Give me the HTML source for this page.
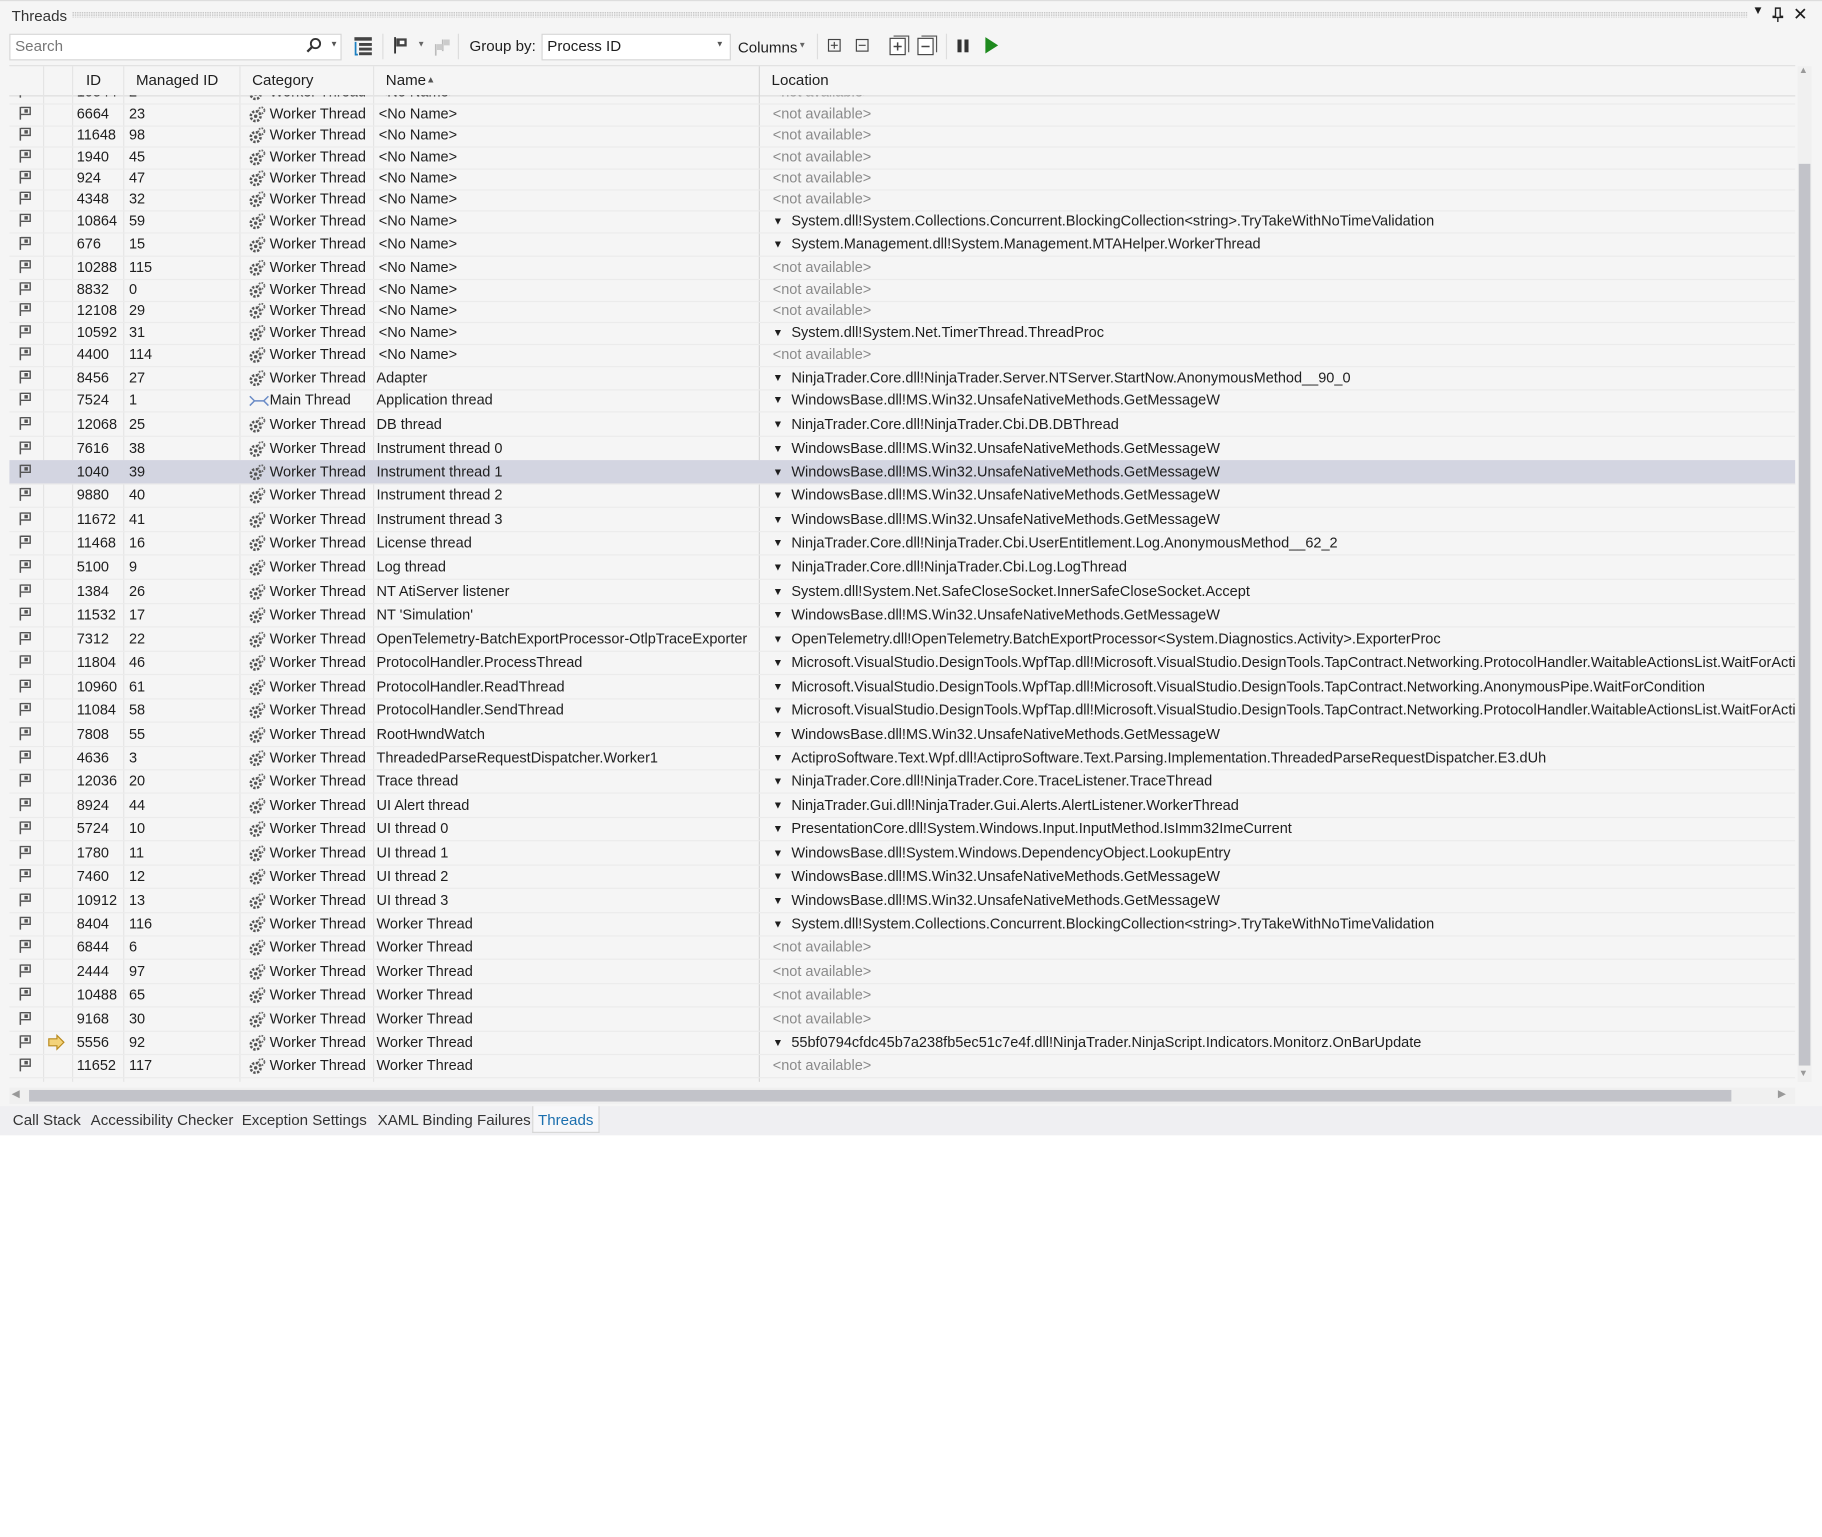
<!DOCTYPE html>
<html><head><meta charset="utf-8"><style>
html,body{margin:0;padding:0;background:#fff;width:1822px;height:1537px;overflow:hidden}
#w{position:absolute;left:0;top:0;width:1568px;height:1323px;transform:scale(1.16199);transform-origin:0 0;font-family:"Liberation Sans",sans-serif;font-size:12.5px;color:#1e1e1e}
.abs{position:absolute;white-space:nowrap}
#panel{position:absolute;left:0;top:0;width:1568px;height:976px;background:#f5f5f5;border-top:1px solid #ddd}
.dots{position:absolute;left:62px;right:64px;top:9px;height:5px;background-image:radial-gradient(#c4c4c4 0.6px,transparent 0.7px);background-size:2px 2px}
.box{position:absolute;background:#fff;border:1px solid #d6d6d6}
.sep{position:absolute;width:1px;background:#ccc}
.hdr{position:absolute;top:56px;height:25px;line-height:24px;font-size:13px}
#list{position:absolute;left:8px;top:81px;width:1537px;height:849px;overflow:hidden}
.row{position:absolute;left:0;width:1537px;height:20px;line-height:20px;border-bottom:1px solid #ebebeb}
.row span{position:absolute;white-space:nowrap}
.sel{background:#d3d5e1}
.na{color:#8a8a8a}
.vl{position:absolute;top:56px;width:1px;background:#e4e4e4;height:874px}
</style></head><body><div id="w">
<div id="panel">
<div class="abs" style="left:10px;top:5px;font-size:13px;color:#333">Threads</div>
<div class="dots"></div>
<div class="abs" style="left:1508px;top:3px;font-size:10px">▼</div>
<svg class="abs" style="left:1525px;top:5px" width="10" height="13"><path d="M3 1h4v7h2v1H1V8h2z M5 9v4" stroke="#222" fill="none" stroke-width="1.2"/></svg>
<div class="abs" style="left:1543px;top:2px;font-size:15px">✕</div>

<div class="box" style="left:8px;top:28px;width:284px;height:21px"></div>
<div class="abs" style="left:13px;top:31px;color:#777;font-size:13px">Search</div>
<svg class="abs" style="left:263px;top:31px" width="14" height="14"><circle cx="8.5" cy="5.5" r="4" stroke="#333" stroke-width="1.6" fill="none"/><path d="M5.5 8.5L1.5 12.5" stroke="#333" stroke-width="2"/></svg>
<div class="abs" style="left:284px;top:34px;font-size:7px;color:#555">▼</div>
<svg class="abs" style="left:304px;top:30px" width="17" height="17"><rect x="1" y="1" width="15" height="3" fill="#444"/><rect x="5" y="6" width="11" height="2.5" fill="#444"/><rect x="5" y="10" width="11" height="2.5" fill="#444"/><rect x="5" y="14" width="11" height="2.5" fill="#444"/><path d="M2 5v11h2" stroke="#1a7fc1" fill="none" stroke-width="1.5"/></svg>
<div class="sep" style="left:329px;top:28px;height:22px;background:#ddd"></div>
<svg class="abs" style="left:338px;top:30px" width="14" height="16"><path d="M2 1v14" stroke="#333" stroke-width="1.6"/><path d="M3 2h9v7H3z" fill="#444"/><rect x="6" y="4" width="4" height="3" fill="#fff"/></svg>
<div class="abs" style="left:359px;top:34px;font-size:7px;color:#666">▼</div>
<svg class="abs" style="left:372px;top:31px" width="16" height="16"><path d="M3 6v10M9 2v10" stroke="#bbb" stroke-width="1.4"/><path d="M4 6h5v5H4zM10 2h5v5h-5z" fill="#ccc"/></svg>
<div class="sep" style="left:394px;top:28px;height:22px;background:#ddd"></div>
<div class="abs" style="left:404px;top:31px;font-size:13px">Group by:</div>
<div class="box" style="left:466px;top:28px;width:161px;height:21px"></div>
<div class="abs" style="left:471px;top:31px;font-size:13px">Process ID</div>
<div class="abs" style="left:616px;top:34px;font-size:7px;color:#555">▼</div>
<div class="abs" style="left:635px;top:32px;font-size:13px">Columns</div>
<div class="abs" style="left:687px;top:35px;font-size:7px;color:#666">▼</div>
<div class="sep" style="left:703px;top:28px;height:22px;background:#ddd"></div>
<svg class="abs" style="left:712px;top:32px" width="12" height="12"><rect x="1" y="1" width="10" height="10" fill="none" stroke="#444"/><path d="M3 6h6M6 3v6" stroke="#444"/></svg>
<svg class="abs" style="left:736px;top:32px" width="12" height="12"><rect x="1" y="1" width="10" height="10" fill="none" stroke="#444"/><path d="M3 6h6" stroke="#444"/></svg>
<svg class="abs" style="left:765px;top:29px" width="18" height="18"><path d="M4 1h13v14" fill="none" stroke="#555"/><rect x="1" y="3" width="13" height="14" fill="#fff" stroke="#444"/><path d="M4 10h7M7.5 6.5v7" stroke="#444" stroke-width="1.3"/></svg>
<svg class="abs" style="left:789px;top:29px" width="18" height="18"><path d="M4 1h13v14" fill="none" stroke="#555"/><rect x="1" y="3" width="13" height="14" fill="#fff" stroke="#444"/><path d="M4 10h7" stroke="#444" stroke-width="1.3"/></svg>
<div class="sep" style="left:814px;top:28px;height:22px;background:#ddd"></div>
<svg class="abs" style="left:823px;top:32px" width="12" height="13"><rect x="1" y="1" width="3.5" height="11" fill="#333"/><rect x="7" y="1" width="3.5" height="11" fill="#333"/></svg>
<svg class="abs" style="left:846px;top:30px" width="14" height="16"><path d="M2 1L13 8L2 15z" fill="#1e8a1e"/></svg>

<div style="position:absolute;left:8px;top:55px;width:1537px;height:25px;border-top:1px solid #e0e0e0;border-bottom:1px solid #dcdcdc"></div>
<div class="hdr" style="left:74px">ID</div>
<div class="hdr" style="left:117px">Managed ID</div>
<div class="hdr" style="left:217px">Category</div>
<div class="hdr" style="left:332px">Name<span style="font-size:8px;color:#555;position:relative;top:-2px">▲</span></div>
<div class="hdr" style="left:664px">Location</div>
<div class="vl" style="left:37px"></div><div class="vl" style="left:62px"></div><div class="vl" style="left:106px"></div><div class="vl" style="left:206px"></div><div class="vl" style="left:321px"></div><div class="vl" style="left:653px;background:#d6d6d6"></div>

<div id="list"></div>

<div class="abs" style="left:1547px;top:56px;width:12px;height:874px;background:#f0f0f0"></div>
<div class="abs" style="left:1548px;top:55px;font-size:8px;color:#999">▲</div>
<div class="abs" style="left:1548px;top:140px;width:10px;height:776px;background:#c2c3c9"></div>
<div class="abs" style="left:1548px;top:918px;font-size:8px;color:#999">▼</div>

<div class="abs" style="left:8px;top:935px;width:1537px;height:14px;background:#f0f0f0"></div>
<div class="abs" style="left:10px;top:935px;font-size:9px;color:#999">◀</div>
<div class="abs" style="left:25px;top:937px;width:1465px;height:10px;background:#c2c3c9"></div>
<div class="abs" style="left:1530px;top:935px;font-size:9px;color:#999">▶</div>

<div class="abs" style="left:0;top:951px;width:1568px;height:25px;background:#efeff2"></div>
<div class="abs" style="left:458px;top:951px;width:56px;height:22px;background:#f7f7f9;border:1px solid #d6d6d6;border-top:none"></div>
<div class="abs" style="left:11px;top:955px;font-size:13px;color:#333">Call Stack</div>
<div class="abs" style="left:78px;top:955px;font-size:13px;color:#333">Accessibility Checker</div>
<div class="abs" style="left:208px;top:955px;font-size:13px;color:#333">Exception Settings</div>
<div class="abs" style="left:325px;top:955px;font-size:13px;color:#333">XAML Binding Failures</div>
<div class="abs" style="left:463px;top:955px;font-size:13px;color:#1b6fae">Threads</div>
</div>
</div>
<script>
var G='<svg width="15" height="15" style="position:absolute;left:206px;top:3px" viewBox="0 0 15 15"><circle cx="6" cy="9" r="4.2" fill="none" stroke="#555" stroke-width="2.2" stroke-dasharray="2 1.3"/><circle cx="6" cy="9" r="1.5" fill="#555"/><circle cx="11" cy="4" r="2.6" fill="none" stroke="#666" stroke-width="1.5" stroke-dasharray="1.4 1"/></svg>';
var F='<svg width="12" height="13" style="position:absolute;left:8px;top:3px" viewBox="0 0 12 13"><path d="M1.5 1v11" stroke="#555" stroke-width="1.3"/><path d="M2 1.5h8v6H2" fill="none" stroke="#555" stroke-width="1.2"/><rect x="5" y="3" width="3" height="3" fill="#555"/></svg>';
var M='<svg width="18" height="10" style="position:absolute;left:206px;top:6px"><path d="M1 1l4 4-4 4M17 1l-4 4 4 4M5 5h8" stroke="#6a8bc6" fill="none" stroke-width="1.3"/></svg>';
var NA='<not available>';
var R=[
[78,'10544','2','Worker Thread','<No Name>',NA,0],
[97,'6664','23','Worker Thread','<No Name>',NA,0],
[115,'11648','98','Worker Thread','<No Name>',NA,0],
[134,'1940','45','Worker Thread','<No Name>',NA,0],
[152,'924','47','Worker Thread','<No Name>',NA,0],
[170,'4348','32','Worker Thread','<No Name>',NA,0],
[189,'10864','59','Worker Thread','<No Name>','System.dll!System.Collections.Concurrent.BlockingCollection<string>.TryTakeWithNoTimeValidation',1],
[209,'676','15','Worker Thread','<No Name>','System.Management.dll!System.Management.MTAHelper.WorkerThread',1],
[229,'10288','115','Worker Thread','<No Name>',NA,0],
[248,'8832','0','Worker Thread','<No Name>',NA,0],
[266,'12108','29','Worker Thread','<No Name>',NA,0],
[285,'10592','31','Worker Thread','<No Name>','System.dll!System.Net.TimerThread.ThreadProc',1],
[304,'4400','114','Worker Thread','<No Name>',NA,0],
[324,'8456','27','Worker Thread','Adapter','NinjaTrader.Core.dll!NinjaTrader.Server.NTServer.StartNow.AnonymousMethod__90_0',1],
[343,'7524','1','Main Thread','Application thread','WindowsBase.dll!MS.Win32.UnsafeNativeMethods.GetMessageW',1],
[364,'12068','25','Worker Thread','DB thread','NinjaTrader.Core.dll!NinjaTrader.Cbi.DB.DBThread',1],
[385,'7616','38','Worker Thread','Instrument thread 0','WindowsBase.dll!MS.Win32.UnsafeNativeMethods.GetMessageW',1],
[405,'1040','39','Worker Thread','Instrument thread 1','WindowsBase.dll!MS.Win32.UnsafeNativeMethods.GetMessageW',1,1],
[425,'9880','40','Worker Thread','Instrument thread 2','WindowsBase.dll!MS.Win32.UnsafeNativeMethods.GetMessageW',1],
[446,'11672','41','Worker Thread','Instrument thread 3','WindowsBase.dll!MS.Win32.UnsafeNativeMethods.GetMessageW',1],
[466,'11468','16','Worker Thread','License thread','NinjaTrader.Core.dll!NinjaTrader.Cbi.UserEntitlement.Log.AnonymousMethod__62_2',1],
[487,'5100','9','Worker Thread','Log thread','NinjaTrader.Core.dll!NinjaTrader.Cbi.Log.LogThread',1],
[508,'1384','26','Worker Thread','NT AtiServer listener','System.dll!System.Net.SafeCloseSocket.InnerSafeCloseSocket.Accept',1],
[528,'11532','17','Worker Thread',"NT 'Simulation'",'WindowsBase.dll!MS.Win32.UnsafeNativeMethods.GetMessageW',1],
[549,'7312','22','Worker Thread','OpenTelemetry-BatchExportProcessor-OtlpTraceExporter','OpenTelemetry.dll!OpenTelemetry.BatchExportProcessor<System.Diagnostics.Activity>.ExporterProc',1],
[569,'11804','46','Worker Thread','ProtocolHandler.ProcessThread','Microsoft.VisualStudio.DesignTools.WpfTap.dll!Microsoft.VisualStudio.DesignTools.TapContract.Networking.ProtocolHandler.WaitableActionsList.WaitForAction',1],
[590,'10960','61','Worker Thread','ProtocolHandler.ReadThread','Microsoft.VisualStudio.DesignTools.WpfTap.dll!Microsoft.VisualStudio.DesignTools.TapContract.Networking.AnonymousPipe.WaitForCondition',1],
[610,'11084','58','Worker Thread','ProtocolHandler.SendThread','Microsoft.VisualStudio.DesignTools.WpfTap.dll!Microsoft.VisualStudio.DesignTools.TapContract.Networking.ProtocolHandler.WaitableActionsList.WaitForAction',1],
[631,'7808','55','Worker Thread','RootHwndWatch','WindowsBase.dll!MS.Win32.UnsafeNativeMethods.GetMessageW',1],
[651,'4636','3','Worker Thread','ThreadedParseRequestDispatcher.Worker1','ActiproSoftware.Text.Wpf.dll!ActiproSoftware.Text.Parsing.Implementation.ThreadedParseRequestDispatcher.E3.dUh',1],
[671,'12036','20','Worker Thread','Trace thread','NinjaTrader.Core.dll!NinjaTrader.Core.TraceListener.TraceThread',1],
[692,'8924','44','Worker Thread','UI Alert thread','NinjaTrader.Gui.dll!NinjaTrader.Gui.Alerts.AlertListener.WorkerThread',1],
[712,'5724','10','Worker Thread','UI thread 0','PresentationCore.dll!System.Windows.Input.InputMethod.IsImm32ImeCurrent',1],
[733,'1780','11','Worker Thread','UI thread 1','WindowsBase.dll!System.Windows.DependencyObject.LookupEntry',1],
[753,'7460','12','Worker Thread','UI thread 2','WindowsBase.dll!MS.Win32.UnsafeNativeMethods.GetMessageW',1],
[774,'10912','13','Worker Thread','UI thread 3','WindowsBase.dll!MS.Win32.UnsafeNativeMethods.GetMessageW',1],
[794,'8404','116','Worker Thread','Worker Thread','System.dll!System.Collections.Concurrent.BlockingCollection<string>.TryTakeWithNoTimeValidation',1],
[814,'6844','6','Worker Thread','Worker Thread',NA,0],
[835,'2444','97','Worker Thread','Worker Thread',NA,0],
[855,'10488','65','Worker Thread','Worker Thread',NA,0],
[876,'9168','30','Worker Thread','Worker Thread',NA,0],
[896,'5556','92','Worker Thread','Worker Thread','55bf0794cfdc45b7a238fb5ec51c7e4f.dll!NinjaTrader.NinjaScript.Indicators.Monitorz.OnBarUpdate',1,0,1],
[916,'11652','117','Worker Thread','Worker Thread',NA,0]];
function e(s){return s.replace(/&/g,'&amp;').replace(/</g,'&lt;').replace(/>/g,'&gt;')}
var h='';
R.forEach(function(r){
 var t=r[0]-81-10;
 var loc=r[6]?'<span style="left:657px;font-size:9px">▼</span><span style="left:673px">'+e(r[5])+'</span>':'<span class="na" style="left:657px">'+e(r[5])+'</span>';
 var arrow=r[8]?'<svg width="16" height="14" style="position:absolute;left:33px;top:3px"><path d="M1 4h7V1l6 6-6 6V10H1z" fill="#f3d37a" stroke="#b8891c" stroke-width="1"/></svg>':'';
 h+='<div class="row'+(r[7]?' sel':'')+'" style="top:'+t+'px">'+F+arrow+
 '<span style="left:58px">'+r[1]+'</span><span style="left:103px">'+r[2]+'</span>'+(r[3]=='Main Thread'?M:G)+
 '<span style="left:224px">'+r[3]+'</span><span style="left:'+(r[4]=='<No Name>'?318:316)+'px">'+e(r[4])+'</span>'+loc+'</div>';
});
document.getElementById('list').innerHTML=h;
</script>
</body></html>
